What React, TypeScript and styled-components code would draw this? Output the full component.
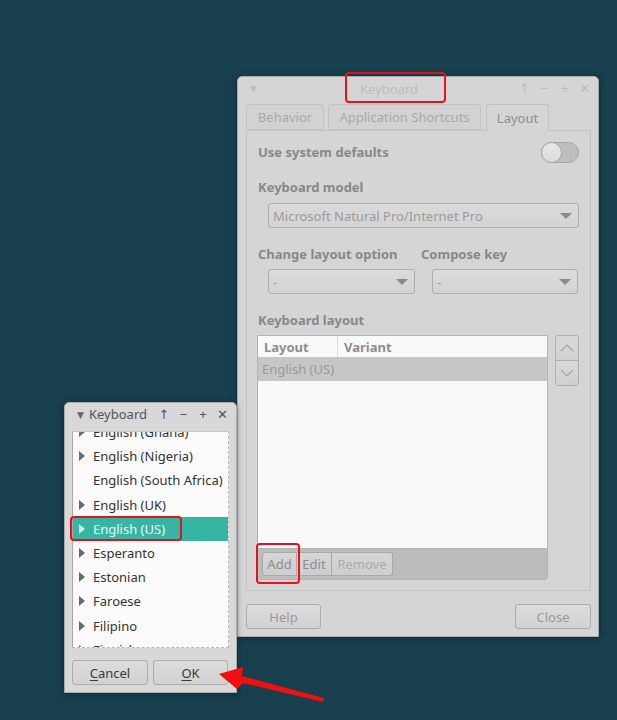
import React from "react";
import styled, { createGlobalStyle } from "styled-components";

const Global = createGlobalStyle`
  html, body { margin: 0; padding: 0; background: #173f4e; }
  body { font-family: "Noto Sans", "DejaVu Sans", sans-serif; font-size: 13px; }
`;

const Desktop = styled.div`
  position: relative;
  width: 617px;
  height: 720px;
  overflow: hidden;
  background: #173f4e;
`;

const Window = styled.div<{ $x: number; $y: number; $w: number; $h: number; $bg: string }>`
  position: absolute;
  left: ${(p) => p.$x}px;
  top: ${(p) => p.$y}px;
  width: ${(p) => p.$w}px;
  height: ${(p) => p.$h}px;
  box-sizing: border-box;
  background: ${(p) => p.$bg};
  border: 1px solid #a9a9a9;
  border-radius: 5px 5px 0 0;
  display: flex;
  flex-direction: column;
  box-shadow: 0 1px 6px rgba(0, 0, 0, 0.35);
`;

const TitleBar = styled.div<{ $h: number; $color: string; $pr: number }>`
  height: ${(p) => p.$h}px;
  display: grid;
  grid-template-columns: auto 1fr auto;
  align-items: center;
  padding: 0 ${(p) => p.$pr}px 0 10px;
  color: ${(p) => p.$color};
  flex-shrink: 0;
`;

const TitleText = styled.div<{ $center?: boolean }>`
  font-size: 13px;
  text-align: ${(p) => (p.$center ? "center" : "left")};
  padding-left: ${(p) => (p.$center ? 0 : 3)}px;
  white-space: nowrap;
`;

const WinButtons = styled.div<{ $gap: number }>`
  display: flex;
  gap: ${(p) => p.$gap}px;
  align-items: center;
`;

const WinGlyph = styled.span`
  width: 11px;
  display: flex;
  justify-content: center;
  font-size: 13px;
  line-height: 1;
`;

const Body = styled.div`
  flex: 1;
  display: flex;
  flex-direction: column;
  padding: 4px 7px 7px 8px;
`;

const TabRow = styled.div`
  display: flex;
  gap: 4px;
  height: 26px;
  align-items: flex-end;
  position: relative;
  z-index: 1;
`;

const Tab = styled.div<{ $active?: boolean; $w: number }>`
  width: ${(p) => p.$w}px;
  height: ${(p) => (p.$active ? 27 : 26)}px;
  margin-bottom: ${(p) => (p.$active ? -1 : 0)}px;
  margin-left: ${(p) => (p.$active ? 1 : 0)}px;
  box-sizing: border-box;
  border: 1px solid #c3c3c3;
  border-bottom: ${(p) => (p.$active ? "none" : "1px solid #c3c3c3")};
  border-radius: 3px 3px 0 0;
  background: ${(p) => (p.$active ? "#d5d5d5" : "#d2d2d2")};
  color: ${(p) => (p.$active ? "#8e8e8e" : "#a9a9a9")};
  display: flex;
  align-items: center;
  justify-content: center;
  padding-bottom: ${(p) => (p.$active ? 1 : 0)}px;
  font-size: 13px;
  white-space: nowrap;
`;

const Panel = styled.div`
  flex: 1;
  border: 1px solid #c3c3c3;
  background: #d5d5d5;
  padding: 11px 11px 10px 11px;
  display: flex;
  flex-direction: column;
`;

const ToggleRow = styled.div`
  display: flex;
  justify-content: space-between;
  align-items: center;
  height: 20px;
`;

const Label = styled.div`
  font-weight: 700;
  color: #888;
  font-size: 13px;
  line-height: 18px;
  white-space: nowrap;
`;

const Toggle = styled.div`
  width: 38px;
  height: 21px;
  box-sizing: border-box;
  border-radius: 11px;
  border: 1px solid #a6a6a6;
  background: #bebebe;
  position: relative;
`;

const Knob = styled.div`
  position: absolute;
  left: -1px;
  top: -1px;
  width: 21px;
  height: 21px;
  box-sizing: border-box;
  border-radius: 50%;
  background: linear-gradient(#e8e8e8, #dcdcdc);
  border: 1px solid #a6a6a6;
`;

const Section = styled.div<{ $mt: number; $gap: number; $grow?: boolean }>`
  margin-top: ${(p) => p.$mt}px;
  display: flex;
  flex-direction: column;
  gap: ${(p) => p.$gap}px;
  flex: ${(p) => (p.$grow ? 1 : "none")};
`;

const Indent = styled.div<{ $pl: number }>`
  padding-left: ${(p) => p.$pl}px;
`;

const Combo = styled.div`
  height: 25px;
  box-sizing: border-box;
  border: 1px solid #afafaf;
  border-radius: 3px;
  background: linear-gradient(#dbdbdb, #d3d3d3);
  display: flex;
  align-items: center;
  justify-content: space-between;
  padding: 0 6px 0 4px;
  color: #9b9b9b;
  font-size: 13px;
  white-space: nowrap;
`;

const ComboArrow = styled.span`
  width: 0;
  height: 0;
  border-left: 6px solid transparent;
  border-right: 6px solid transparent;
  border-top: 6px solid #8a8a8a;
`;

const TwoCols = styled.div`
  margin-top: 17px;
  display: grid;
  grid-template-columns: 157px 157px;
  column-gap: 6px;
  row-gap: 6px;
`;

const TreeRow = styled.div`
  display: flex;
  gap: 7px;
  flex: 1;
  margin-left: -1px;
`;

const TreeBox = styled.div`
  width: 291px;
  box-sizing: border-box;
  border: 1px solid #b4b4b4;
  border-radius: 0 0 4px 4px;
  display: flex;
  flex-direction: column;
  overflow: hidden;
  background: #bcbcbc;
`;

const TreeArea = styled.div`
  flex: 1;
  background: #f9f9f9;
  border-bottom: 1px solid #b4b4b4;
`;

const TreeHeader = styled.div`
  display: grid;
  grid-template-columns: 80px 1fr;
  height: 21px;
  font-weight: 700;
  color: #8d8d8d;
`;

const HeaderCell = styled.div<{ $divider?: boolean }>`
  padding-left: 6px;
  display: flex;
  align-items: center;
  border-right: ${(p) => (p.$divider ? "1px solid #dcdcdc" : "none")};
`;

const TreeItem = styled.div`
  height: 24px;
  background: #c6c6c6;
  color: #9a9a9a;
  display: flex;
  align-items: center;
  padding-left: 4px;
`;

const TreeToolbar = styled.div`
  height: 30px;
  display: flex;
  align-items: center;
  padding: 0 4px;
`;

const LinkedButton = styled.div<{ $w: number; $dim?: boolean; $first?: boolean; $last?: boolean }>`
  width: ${(p) => p.$w}px;
  height: 24px;
  box-sizing: border-box;
  border: 1px solid #a9a9a9;
  border-left: ${(p) => (p.$first ? "1px solid #a9a9a9" : "none")};
  border-radius: ${(p) => (p.$first ? "3px 0 0 3px" : p.$last ? "0 3px 3px 0" : "0")};
  background: linear-gradient(#d6d6d6, #cecece);
  color: ${(p) => (p.$dim ? "#acacac" : "#8c8c8c")};
  display: flex;
  align-items: center;
  justify-content: center;
  font-size: 13px;
`;

const UpDown = styled.div`
  width: 24px;
  display: flex;
  flex-direction: column;
  box-sizing: border-box;
  border: 1px solid #b0b0b0;
  border-radius: 3px;
  align-self: flex-start;
  overflow: hidden;
`;

const UpDownBtn = styled.div<{ $top?: boolean }>`
  height: 24px;
  background: linear-gradient(#d9d9d9, #d0d0d0);
  border-top: ${(p) => (p.$top ? "none" : "1px solid #b0b0b0")};
  display: flex;
  align-items: center;
  justify-content: center;
`;

const BottomRow = styled.div`
  margin-top: 13px;
  display: flex;
  justify-content: space-between;
`;

const Button = styled.div<{ $w: number; $dark?: boolean }>`
  width: ${(p) => p.$w}px;
  height: 25px;
  box-sizing: border-box;
  border: 1px solid #adadad;
  border-radius: 3px;
  background: linear-gradient(#dcdcdc, #d2d2d2);
  color: ${(p) => (p.$dark ? "#3a3a3a" : "#9a9a9a")};
  display: flex;
  align-items: center;
  justify-content: center;
  font-size: 13px;
`;

const Mnemonic = styled.span`
  text-decoration: underline;
  text-underline-offset: 2px;
`;

/* small dialog */
const DialogBody = styled.div`
  flex: 1;
  display: flex;
  flex-direction: column;
  padding: 6px 7px 7px 7px;
`;

const ListBox = styled.div`
  height: 217px;
  box-sizing: border-box;
  background: #fbfbfb;
  border: 1px dashed #b9b9b9;
  border-left: 1px solid #a8a8a8;
  border-top: 1px solid #c8c8c8;
  overflow: hidden;
`;

const ListScroll = styled.div`
  margin-top: -12px;
`;

const ListItem = styled.div<{ $sel?: boolean }>`
  height: 24.2px;
  display: flex;
  align-items: center;
  gap: 8px;
  padding-left: 6px;
  background: ${(p) => (p.$sel ? "#36b5a2" : "transparent")};
  color: ${(p) => (p.$sel ? "#eef8f6" : "#333")};
  font-size: 13px;
  white-space: nowrap;
`;

const Expander = styled.span<{ $show: boolean; $sel?: boolean }>`
  width: 0;
  height: 0;
  border-top: 5px solid transparent;
  border-bottom: 5px solid transparent;
  border-left: 6px solid ${(p) => (p.$show ? (p.$sel ? "#cfeee8" : "#6a6a6a") : "transparent")};
  flex-shrink: 0;
`;

const DialogButtons = styled.div`
  margin-top: 12px;
  display: grid;
  grid-template-columns: 76px 75px;
  gap: 5px;
`;

const Highlight = styled.div<{ $x: number; $y: number; $w: number; $h: number }>`
  position: absolute;
  left: ${(p) => p.$x}px;
  top: ${(p) => p.$y}px;
  width: ${(p) => p.$w}px;
  height: ${(p) => p.$h}px;
  box-sizing: border-box;
  border: 2px solid #e3121c;
  border-radius: 4px;
  pointer-events: none;
`;

const ArrowSvg = styled.svg`
  position: absolute;
  left: 0;
  top: 0;
  pointer-events: none;
`;

const Chevron = ({ up }: { up?: boolean }) => (
  <svg width="14" height="8" viewBox="0 0 14 8">
    <path
      d={up ? "M1 7 L7 1 L13 7" : "M1 1 L7 7 L13 1"}
      fill="none"
      stroke="#a3a3a3"
      strokeWidth="1.2"
    />
  </svg>
);

const listItems: { name: string; exp: boolean; sel?: boolean }[] = [
  { name: "English (Ghana)", exp: true },
  { name: "English (Nigeria)", exp: true },
  { name: "English (South Africa)", exp: false },
  { name: "English (UK)", exp: true },
  { name: "English (US)", exp: true, sel: true },
  { name: "Esperanto", exp: true },
  { name: "Estonian", exp: true },
  { name: "Faroese", exp: true },
  { name: "Filipino", exp: true },
  { name: "Finnish", exp: true },
];

export default function App() {
  return (
    <>
      <Global />
      <Desktop>
        <Window $x={237} $y={76} $w={362} $h={561} $bg="#d5d5d5">
          <TitleBar $h={23} $color="#bdbdbd" $pr={8}>
            <WinGlyph style={{ fontSize: 9 }}>▼</WinGlyph>
            <TitleText $center>Keyboard</TitleText>
            <WinButtons $gap={9}>
              <WinGlyph>↑</WinGlyph>
              <WinGlyph>−</WinGlyph>
              <WinGlyph>+</WinGlyph>
              <WinGlyph>✕</WinGlyph>
            </WinButtons>
          </TitleBar>
          <Body>
            <TabRow>
              <Tab $w={78}>Behavior</Tab>
              <Tab $w={153}>Application Shortcuts</Tab>
              <Tab $w={63} $active>
                Layout
              </Tab>
            </TabRow>
            <Panel>
              <ToggleRow>
                <Label>Use system defaults</Label>
                <Toggle>
                  <Knob />
                </Toggle>
              </ToggleRow>
              <Section $mt={16} $gap={7}>
                <Label>Keyboard model</Label>
                <Indent $pl={10}>
                  <Combo>
                    <span>Microsoft Natural Pro/Internet Pro</span>
                    <ComboArrow />
                  </Combo>
                </Indent>
              </Section>
              <TwoCols>
                <Label>Change layout option</Label>
                <Label>Compose key</Label>
                <Indent $pl={10}>
                  <Combo>
                    <span>-</span>
                    <ComboArrow />
                  </Combo>
                </Indent>
                <Indent $pl={11}>
                  <Combo>
                    <span>-</span>
                    <ComboArrow />
                  </Combo>
                </Indent>
              </TwoCols>
              <Section $mt={17} $gap={6} $grow>
                <Label>Keyboard layout</Label>
                <TreeRow>
                  <TreeBox>
                    <TreeArea>
                      <TreeHeader>
                        <HeaderCell $divider>Layout</HeaderCell>
                        <HeaderCell>Variant</HeaderCell>
                      </TreeHeader>
                      <TreeItem>English (US)</TreeItem>
                    </TreeArea>
                    <TreeToolbar>
                      <LinkedButton $w={35} $first>
                        Add
                      </LinkedButton>
                      <LinkedButton $w={35}>Edit</LinkedButton>
                      <LinkedButton $w={61} $dim $last>
                        Remove
                      </LinkedButton>
                    </TreeToolbar>
                  </TreeBox>
                  <UpDown>
                    <UpDownBtn $top>
                      <Chevron up />
                    </UpDownBtn>
                    <UpDownBtn>
                      <Chevron />
                    </UpDownBtn>
                  </UpDown>
                </TreeRow>
              </Section>
            </Panel>
            <BottomRow>
              <Button $w={75}>Help</Button>
              <Button $w={76}>Close</Button>
            </BottomRow>
          </Body>
        </Window>

        <Window $x={64} $y={402} $w={173} $h={291} $bg="#d8d8d8">
          <TitleBar $h={22} $color="#555" $pr={8}>
            <WinGlyph style={{ fontSize: 9, color: "#666" }}>▼</WinGlyph>
            <TitleText>Keyboard</TitleText>
            <WinButtons $gap={8.5}>
              <WinGlyph>↑</WinGlyph>
              <WinGlyph>−</WinGlyph>
              <WinGlyph>+</WinGlyph>
              <WinGlyph>✕</WinGlyph>
            </WinButtons>
          </TitleBar>
          <DialogBody>
            <ListBox>
              <ListScroll>
                {listItems.map((it) => (
                  <ListItem key={it.name} $sel={it.sel}>
                    <Expander $show={it.exp} $sel={it.sel} />
                    {it.name}
                  </ListItem>
                ))}
              </ListScroll>
            </ListBox>
            <DialogButtons>
              <Button $w={76} $dark>
                <Mnemonic>C</Mnemonic>ancel
              </Button>
              <Button $w={75} $dark>
                <Mnemonic>O</Mnemonic>K
              </Button>
            </DialogButtons>
          </DialogBody>
        </Window>

        <Highlight $x={345} $y={72} $w={101} $h={31} />
        <Highlight $x={256} $y={543} $w={44} $h={41} />
        <Highlight $x={70} $y={516} $w={112} $h={25} />

        <ArrowSvg width="617" height="720" viewBox="0 0 617 720">
          <polygon
            points="219,674 243,667 242,676 324,698 323,702 243,683 237,689"
            fill="#f01010"
          />
        </ArrowSvg>
      </Desktop>
    </>
  );
}
